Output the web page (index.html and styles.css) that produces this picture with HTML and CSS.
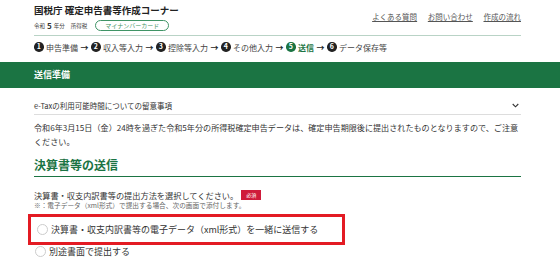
FILE: index.html
```html
<!DOCTYPE html>
<html lang="ja">
<head>
  <meta charset="UTF-8">
  <meta name="viewport" content="width=device-width, initial-scale=1.0">
  <title>確定申告書等作成コーナー</title>
  <link rel="stylesheet" href="styles.css">
</head>
<body>

  <!-- Header -->
  <div class="header">
    <div class="head-top">
      <div>
        <div class="title">国税庁 確定申告書等作成コーナー</div>
        <div class="sub">
          <span class="sub-small">令和</span>
          <span class="year">5</span>
          <span class="sub-small">年分</span>
          <span class="sub-small tax">所得税</span>
          <span class="pill">マイナンバーカード</span>
        </div>
      </div>
      <div class="links">
        <a href="#">よくある質問</a>
        <a href="#">お問い合わせ</a>
        <a href="#">作成の流れ</a>
      </div>
    </div>

    <div class="steps">
      <span class="num">1</span>申告準備<span class="arrow">→</span>
      <span class="num">2</span>収入等入力<span class="arrow">→</span>
      <span class="num">3</span>控除等入力<span class="arrow">→</span>
      <span class="num">4</span>その他入力<span class="arrow">→</span>
      <span class="current"><span class="num">5</span>送信</span><span class="arrow">→</span>
      <span class="num">6</span>データ保存等
    </div>
  </div>

  <!-- Page title bar -->
  <div class="bar">
    <div class="wrap">送信準備</div>
  </div>

  <div class="main">
    <div class="accordion">
      <span>e-Taxの利用可能時間についての留意事項</span>
      <svg class="chev" width="7" height="5" viewBox="0 0 7 5">
        <path d="M0.7 1 L3.5 3.8 L6.3 1" fill="none" stroke="#333" stroke-width="1.1"/>
      </svg>
    </div>

    <p class="notice">令和6年3月15日（金）24時を過ぎた令和5年分の所得税確定申告データは、確定申告期限後に提出されたものとなりますので、ご注意<br>ください。</p>

    <h2 class="section">決算書等の送信</h2>

    <div class="question">決算書・収支内訳書等の提出方法を選択してください。<span class="badge">必須</span></div>
    <div class="note">※：電子データ（xml形式）で提出する場合、次の画面で添付します。</div>

    <label class="option highlight">
      <span class="radio"></span>決算書・収支内訳書等の電子データ（xml形式）を一緒に送信する
    </label>
    <label class="option">
      <span class="radio"></span>別途書面で提出する
    </label>
  </div>

</body>
</html>
```

FILE: styles.css
```css
body, html {
  margin: 0;
  background: #fff;
  font-family: "Noto Sans CJK JP", "Noto Sans", sans-serif;
  color: #333;
}

.header,
.main,
.bar .wrap {
  width: 487px;
  margin-left: 34px;
}

/* Header */
.head-top {
  display: flex;
  justify-content: space-between;
  padding-top: 4px;
  height: 31px;
  border-bottom: 1px solid #b9d3c6;
}

.title {
  font-size: 9.5px;
  font-weight: 700;
  line-height: 12px;
  color: #222;
}

.sub {
  display: flex;
  align-items: center;
  margin-top: 4px;
  height: 11px;
}

.sub-small {
  font-size: 5.5px;
  color: #444;
}

.year {
  font-size: 8px;
  font-weight: 700;
  margin: 0 2px;
}

.tax {
  margin-left: 6px;
}

.pill {
  margin-left: 8px;
  padding: 0 9px;
  height: 9px;
  line-height: 9px;
  border: 1px solid #3f9466;
  border-radius: 6px;
  font-size: 6px;
  color: #3f9466;
}

.links {
  margin-top: 8px;
  font-size: 7.5px;
  line-height: 10px;
}

.links a {
  color: #555;
  margin-left: 9px;
}

/* Steps */
.steps {
  display: flex;
  align-items: center;
  height: 12px;
  margin-top: 5px;
  font-size: 8px;
  color: #444;
}

.num {
  display: inline-block;
  width: 9.5px;
  height: 9.5px;
  line-height: 9.5px;
  border-radius: 50%;
  background: #222;
  color: #fff;
  font-size: 7px;
  font-weight: 700;
  text-align: center;
  margin-right: 2.5px;
}

.arrow {
  margin: 0 2.5px;
  font-weight: 700;
  color: #222;
}

.current {
  display: flex;
  align-items: center;
  color: #1b7443;
  font-weight: 700;
}

.current .num {
  background: #1b7443;
}

/* Green bar */
.bar {
  margin-top: 9px;
  height: 26px;
  background: #1b7443;
}

.bar .wrap {
  color: #fff;
  font-size: 9px;
  font-weight: 700;
  line-height: 26px;
}

/* Main */
.accordion {
  display: flex;
  justify-content: space-between;
  align-items: center;
  margin-top: 8px;
  height: 18px;
  border-bottom: 1px solid #ddd;
  font-size: 7.5px;
  color: #333;
}

.chev {
  margin-right: 2px;
}

.notice {
  margin: 6px 0 0;
  font-size: 8.1px;
  line-height: 14px;
  color: #333;
}

.section {
  margin: 8px 0 0;
  padding-bottom: 3px;
  border-bottom: 1.5px solid #1b7443;
  font-size: 12px;
  line-height: 16px;
  color: #1b7443;
}

.question {
  display: flex;
  align-items: center;
  margin-top: 12px;
  height: 11px;
  font-size: 8.2px;
  color: #333;
}

.badge {
  margin-left: 3px;
  padding: 0 5px;
  height: 10px;
  line-height: 10px;
  background: #cf1b3b;
  color: #fff;
  font-size: 5px;
}

.note {
  margin-top: 1px;
  font-size: 6.7px;
  line-height: 8px;
  color: #666;
}

.option {
  display: flex;
  align-items: center;
  height: 12px;
  font-size: 9px;
  color: #333;
}

.radio {
  width: 9px;
  height: 9px;
  border: 1px solid #ccc;
  border-radius: 50%;
  margin: 0 3px 0 1px;
}

/* annotation frame around the first option */
.option.highlight {
  margin: 5px 0 0 -6px;
  padding-left: 5px;
  width: 306px;
  height: 25px;
  border: 3px solid #e31b23;
}
```
